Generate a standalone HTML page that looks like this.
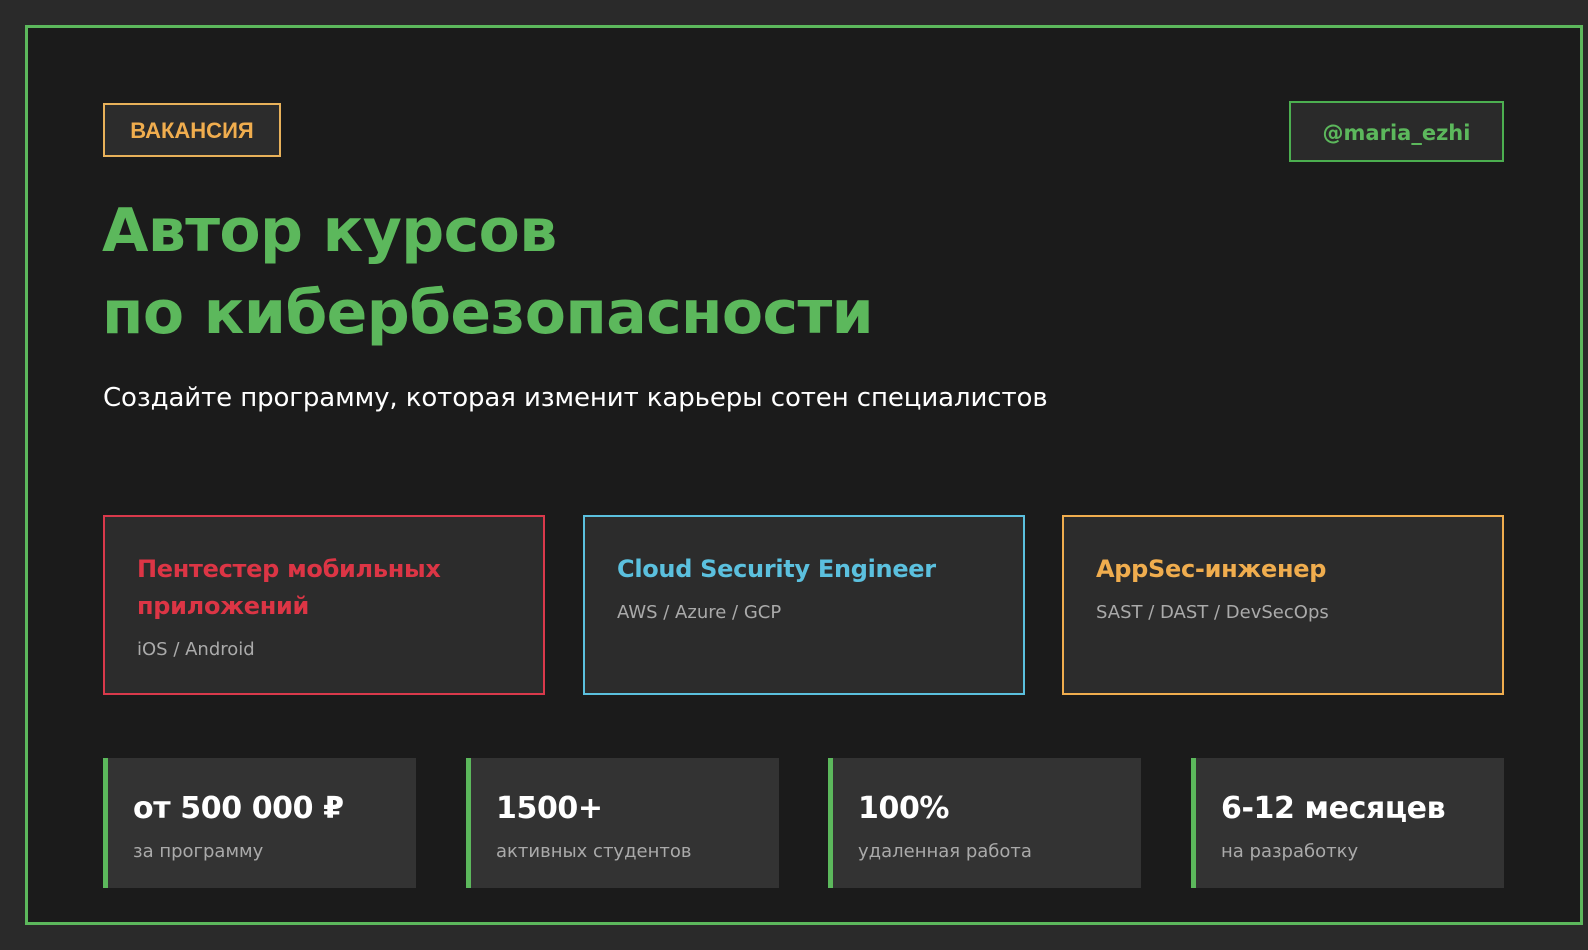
<!DOCTYPE html>
<html><head><meta charset="utf-8"><style>
*{margin:0;padding:0;box-sizing:border-box}
body{width:1588px;height:950px;background:#2a2a2a;font-family:"DejaVu Sans","Liberation Sans",sans-serif;position:relative;overflow:hidden}
.frame{position:absolute;left:25px;top:25px;width:1558px;height:900px;border:3px solid #5cb85c;background:#1b1b1b}
.a{position:absolute}
.badge{left:103px;top:103px;width:178px;height:54px;border:2px solid #e8b15a;background:#2c2c2c;color:#f0ad4e;font-weight:bold;font-size:22px;display:flex;align-items:center;justify-content:center;font-family:"Liberation Sans",sans-serif;padding-top:2px}
.handle{left:1289px;top:101px;width:215px;height:61px;border:2px solid #4caf50;background:#2a2a2a;color:#5cb85c;font-weight:bold;font-size:21px;display:flex;align-items:center;justify-content:center;padding-top:3px}
h1{position:absolute;left:102px;top:190px;color:#5cb85c;font-size:60px;line-height:82px;font-weight:bold;letter-spacing:-0.6px}
.sub{left:103px;top:383px;color:#fff;font-size:26px;letter-spacing:-0.1px}
.card{position:absolute;top:515px;width:442px;height:180px;border:2px solid;background:#2c2c2c;padding:34px 32px}
.card .t{font-weight:bold;font-size:24px;line-height:37px;letter-spacing:-0.3px}
.card .s{color:#aaa;font-size:18px;margin-top:14px}
.stat{position:absolute;top:758px;width:313px;height:130px;background:#333;border-left:5px solid #5cb85c;padding:31px 25px}
.stat .n{color:#fff;font-weight:bold;font-size:30px;line-height:40px;letter-spacing:-0.4px}
.stat .l{color:#aaa;font-size:18px;margin-top:12px}
</style></head><body>
<div class="frame"></div>
<div class="a badge">ВАКАНСИЯ</div>
<div class="a handle">@maria_ezhi</div>
<h1>Автор курсов<br>по кибербезопасности</h1>
<div class="a sub">Создайте программу, которая изменит карьеры сотен специалистов</div>
<div class="card" style="left:103px;border-color:#d9394b"><div class="t" style="color:#dc3545">Пентестер мобильных<br>приложений</div><div class="s">iOS / Android</div></div>
<div class="card" style="left:583px;border-color:#5bc0de"><div class="t" style="color:#5bc0de">Cloud Security Engineer</div><div class="s">AWS / Azure / GCP</div></div>
<div class="card" style="left:1062px;border-color:#f0ad4e"><div class="t" style="color:#f0ad4e">AppSec-инженер</div><div class="s">SAST / DAST / DevSecOps</div></div>
<div class="stat" style="left:103px"><div class="n">от 500 000 ₽</div><div class="l">за программу</div></div>
<div class="stat" style="left:466px"><div class="n">1500+</div><div class="l">активных студентов</div></div>
<div class="stat" style="left:828px"><div class="n">100%</div><div class="l">удаленная работа</div></div>
<div class="stat" style="left:1191px"><div class="n">6-12 месяцев</div><div class="l">на разработку</div></div>
</body></html>
